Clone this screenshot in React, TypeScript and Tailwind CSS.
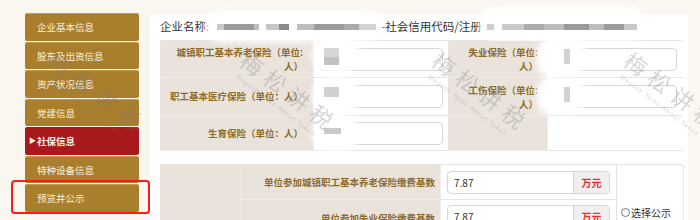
import React from 'react';

const items = ['企业基本信息', '股东及出资信息', '资产状况信息', '党建信息', '社保信息', '特种设备信息', '预览并公示'];

function Block({ w, c }: { w: string; c: string }) {
  return <span className={`${w} ${c} h-[6px] block`} />;
}

function Watermark({ pos }: { pos: string }) {
  return (
    <div className={`absolute ${pos} w-[124px] rotate-[37deg] pointer-events-none text-center text-[#7a7a7a] opacity-[0.3] font-['Noto_Sans_CJK_SC',sans-serif]`}>
      <div className="text-[22px] leading-none tracking-[7px] pl-[7px]">梅松讲税</div>
      <div className="text-[6px] leading-none tracking-[0.8px] mt-[6px] font-['DejaVu_Sans',sans-serif]">Mayson Talks About Taxes</div>
    </div>
  );
}

function InputBox({ children }: { children?: React.ReactNode }) {
  return (
    <div className="relative w-full h-[23px] border border-[#d6d6d6] rounded-[4px] bg-white">
      {children}
    </div>
  );
}

export default function App() {
  return (
    <div className="relative w-[700px] h-[220px] overflow-hidden bg-[#faf7f0] flex font-['Noto_Sans_CJK_SC','Noto_Sans',sans-serif]">
      {/* Sidebar */}
      <div className="ml-[25px] mt-[13px] w-[114px] flex flex-col gap-[1px]">
        {items.map((t, i) =>
          i === 4 ? (
            <div key={t} className="h-[27.5px] flex items-center pl-[4px] bg-[#a8191c] rounded-[2px] text-[9.5px] text-[#fdf4e6] font-bold">
              <span className="w-[8px] text-[7px] leading-none">▶</span>
              <span>{t}</span>
            </div>
          ) : (
            <div key={t} className="h-[27.5px] flex items-center pl-[12px] bg-[#a97f2e] rounded-[2px] text-[9.5px] text-[#fbf1dd] border-t border-[#c29a4c]">
              {t}
            </div>
          )
        )}
      </div>

      {/* Card */}
      <div className="ml-[11px] mt-[14px] w-[538px] h-[220px] bg-white rounded-tl-[5px] pl-[10px]">
        {/* Header */}
        <div className="h-[26px] flex items-center text-[11.5px] text-[#333]">
          <span>企业名称:</span>
          <span className="relative ml-[3px] w-[164px] h-[14px] flex items-center">
            <span className="absolute -left-[6px] -right-[6px] -top-[10px] -bottom-[8px] bg-white blur-[3px] rounded-full" />
            <span className="relative flex items-center blur-[0.6px]">
              <span className="w-[5px]" />
              <Block w="w-[7px]" c="bg-[#c9c9c9]" />
              <Block w="w-[30px]" c="bg-[#9a9a9a]" />
              <Block w="w-[5px]" c="bg-[#bdbdbd]" />
              <span className="w-[7px]" />
              <Block w="w-[13px]" c="bg-[#c6c6c6]" />
              <Block w="w-[10px]" c="bg-[#8a8a8a]" />
              <span className="w-[8px]" />
              <Block w="w-[17px]" c="bg-[#bdbdbd]" />
              <Block w="w-[30px]" c="bg-[#9c9c9c]" />
              <Block w="w-[15px]" c="bg-[#ababab]" />
              <Block w="w-[17px]" c="bg-[#d3d3d3]" />
            </span>
          </span>
          <span className="ml-[5px]">-社会信用代码/注册</span>
          <span className="relative ml-[5px] w-[150px] h-[14px] flex items-center">
            <span className="absolute -left-[8px] -right-[8px] -top-[14px] -bottom-[8px] bg-white blur-[3px] rounded-full" />
            <span className="relative flex items-center blur-[0.6px]">
              <Block w="w-[7px]" c="bg-[#cdcdcd]" />
              <span className="w-[8px]" />
              <Block w="w-[22px]" c="bg-[#c9c9c9]" />
              <Block w="w-[20px]" c="bg-[#ababab]" />
              <Block w="w-[20px]" c="bg-[#bcbcbc]" />
              <Block w="w-[25px]" c="bg-[#9a9a9a]" />
              <Block w="w-[15px]" c="bg-[#bdbdbd]" />
              <Block w="w-[20px]" c="bg-[#9c9c9c]" />
              <Block w="w-[13px]" c="bg-[#c8c8c8]" />
            </span>
          </span>
        </div>

        {/* Table 1 */}
        <div className="w-[522px] grid grid-cols-[153px_135px_99px_135px] grid-rows-[37px_38px_35px] border-t border-l border-[#e8e4de] text-[9.5px] font-bold text-[#8d6b2c]">
          {/* Row 1 */}
          <div className="bg-[#e9e3dc] border-b border-r border-[#f1ede8] flex items-center justify-end text-right pr-[10px] leading-[14px]">
            城镇职工基本养老保险（单位:<br />人）
          </div>
          <div className="relative border-b border-r border-[#e8e4de] flex items-center pl-[5px] pr-[5px]">
            <InputBox />
            <span className="absolute left-[-2px] top-[-4px] w-[48px] h-[36px] bg-white blur-[3px] rounded-full" />
            <span className="absolute left-[10px] top-[7px] w-[15px] h-[9px] bg-[#d6d6d6] blur-[0.5px]" />
            <span className="absolute left-[10px] top-[16px] w-[15px] h-[8px] bg-[#c2c2c2] blur-[0.5px]" />
          </div>
          <div className="relative bg-[#e9e3dc] border-b border-r border-[#f1ede8] flex items-center justify-end text-right pr-[9px] leading-[14px]">
            失业保险（单位:<br />人）
            <span className="absolute right-[-14px] top-[-2px] w-[24px] h-[38px] bg-white blur-[3px] rounded-full" />
          </div>
          <div className="relative border-b border-[#e8e4de] flex items-center pl-[6px] pr-[6px]">
            <InputBox />
            <span className="absolute left-[-6px] top-[-2px] w-[46px] h-[36px] bg-white blur-[3px] rounded-full" />
            <span className="absolute left-[16px] top-[8px] w-[6px] h-[15px] bg-[#d2d2d2] blur-[0.5px]" />
          </div>

          {/* Row 2 */}
          <div className="bg-[#e9e3dc] border-b border-r border-[#f1ede8] flex items-center justify-end pr-[10px] whitespace-nowrap">
            职工基本医疗保险（单位：人）
          </div>
          <div className="relative border-b border-r border-[#e8e4de] flex items-center pl-[5px] pr-[5px]">
            <InputBox />
            <span className="absolute left-[-2px] top-[-2px] w-[48px] h-[38px] bg-white blur-[3px] rounded-full" />
            <span className="absolute left-[10px] top-[9px] w-[15px] h-[10px] bg-[#d0d0d0] blur-[0.5px]" />
          </div>
          <div className="relative bg-[#e9e3dc] border-b border-r border-[#f1ede8] flex items-center justify-end text-right pr-[9px] leading-[14px]">
            工伤保险（单位:<br />人）
            <span className="absolute right-[-14px] top-[0px] w-[24px] h-[36px] bg-white blur-[3px] rounded-full" />
          </div>
          <div className="relative border-b border-[#e8e4de] flex items-center pl-[6px] pr-[6px]">
            <InputBox />
            <span className="absolute left-[-6px] top-[0px] w-[46px] h-[34px] bg-white blur-[3px] rounded-full" />
            <span className="absolute left-[16px] top-[9px] w-[6px] h-[15px] bg-[#d2d2d2] blur-[0.5px]" />
          </div>

          {/* Row 3 */}
          <div className="bg-[#e9e3dc] border-b border-r border-[#f1ede8] flex items-center justify-end pr-[10px] whitespace-nowrap">
            生育保险（单位：人）
          </div>
          <div className="relative border-b border-r border-[#e8e4de] flex items-center pl-[5px] pr-[5px]">
            <InputBox />
            <span className="absolute left-[-2px] top-[-2px] w-[48px] h-[38px] bg-white blur-[3px] rounded-full" />
            <span className="absolute left-[10px] top-[12px] w-[17px] h-[6px] bg-[#cacaca] blur-[0.5px]" />
          </div>
          <div className="bg-[#e9e3dc] border-b border-r border-[#f1ede8]" />
          <div className="border-b border-[#e8e4de]" />
        </div>

        {/* Table 2 */}
        <div className="mt-[13px] w-[523px] grid grid-cols-[80px_200px_176px_67px] grid-rows-[35px_36px] border-t border-l border-[#e8e4de] text-[9.5px]">
          <div className="row-span-2 bg-[#e9e3dc] border-r border-[#efeae4]" />
          <div className="bg-[#e9e3dc] border-b border-r border-[#f1ede8] flex items-center justify-end pr-[5px] font-bold text-[#8d6b2c] whitespace-nowrap">
            单位参加城镇职工基本养老保险缴费基数
          </div>
          <div className="border-b border-r border-[#e8e4de] flex items-center px-[6px]">
            <div className="w-full h-[23px] flex border border-[#d6d6d6] rounded-[4px] overflow-hidden">
              <div className="flex-1 flex items-center pl-[6px] text-[10px] text-[#333]">7.87</div>
              <div className="w-[36px] flex items-center justify-center bg-[#efefef] border-l border-[#d6d6d6] text-[10px] font-bold text-[#ee2b2b]">万元</div>
            </div>
          </div>
          <div className="row-span-2 border-r border-[#e8e4de] bg-white flex items-start pt-[41px] pl-[4px] text-[10px] text-[#333] whitespace-nowrap">
            <span className="w-[9px] h-[9px] rounded-full border border-[#777] mr-[1px] mt-[2px]" />
            <span className="leading-[13px]">选择公示</span>
          </div>
          <div className="bg-[#e9e3dc] border-r border-[#f1ede8] flex items-center justify-end pr-[5px] font-bold text-[#8d6b2c] whitespace-nowrap">
            单位参加失业保险缴费基数
          </div>
          <div className="border-r border-[#e8e4de] flex items-start pt-[5px] px-[6px]">
            <div className="w-full h-[23px] flex border border-[#d6d6d6] rounded-[4px] overflow-hidden">
              <div className="flex-1 flex items-center pl-[6px] text-[10px] text-[#333]">7.87</div>
              <div className="w-[36px] flex items-center justify-center bg-[#efefef] border-l border-[#d6d6d6] text-[10px] font-bold text-[#ee2b2b]">万元</div>
            </div>
          </div>
        </div>
      </div>

      {/* Watermarks */}
      <Watermark pos="left-[30px] top-[77px]" />
      <Watermark pos="left-[222px] top-[77px]" />
      <Watermark pos="left-[414px] top-[77px]" />
      <Watermark pos="left-[606px] top-[77px]" />

      {/* Red annotation box */}
      <div className="absolute left-[11px] top-[180px] w-[139px] h-[34px] border-2 border-[#ff1a1a] rounded-[4px] pointer-events-none" />
    </div>
  );
}
